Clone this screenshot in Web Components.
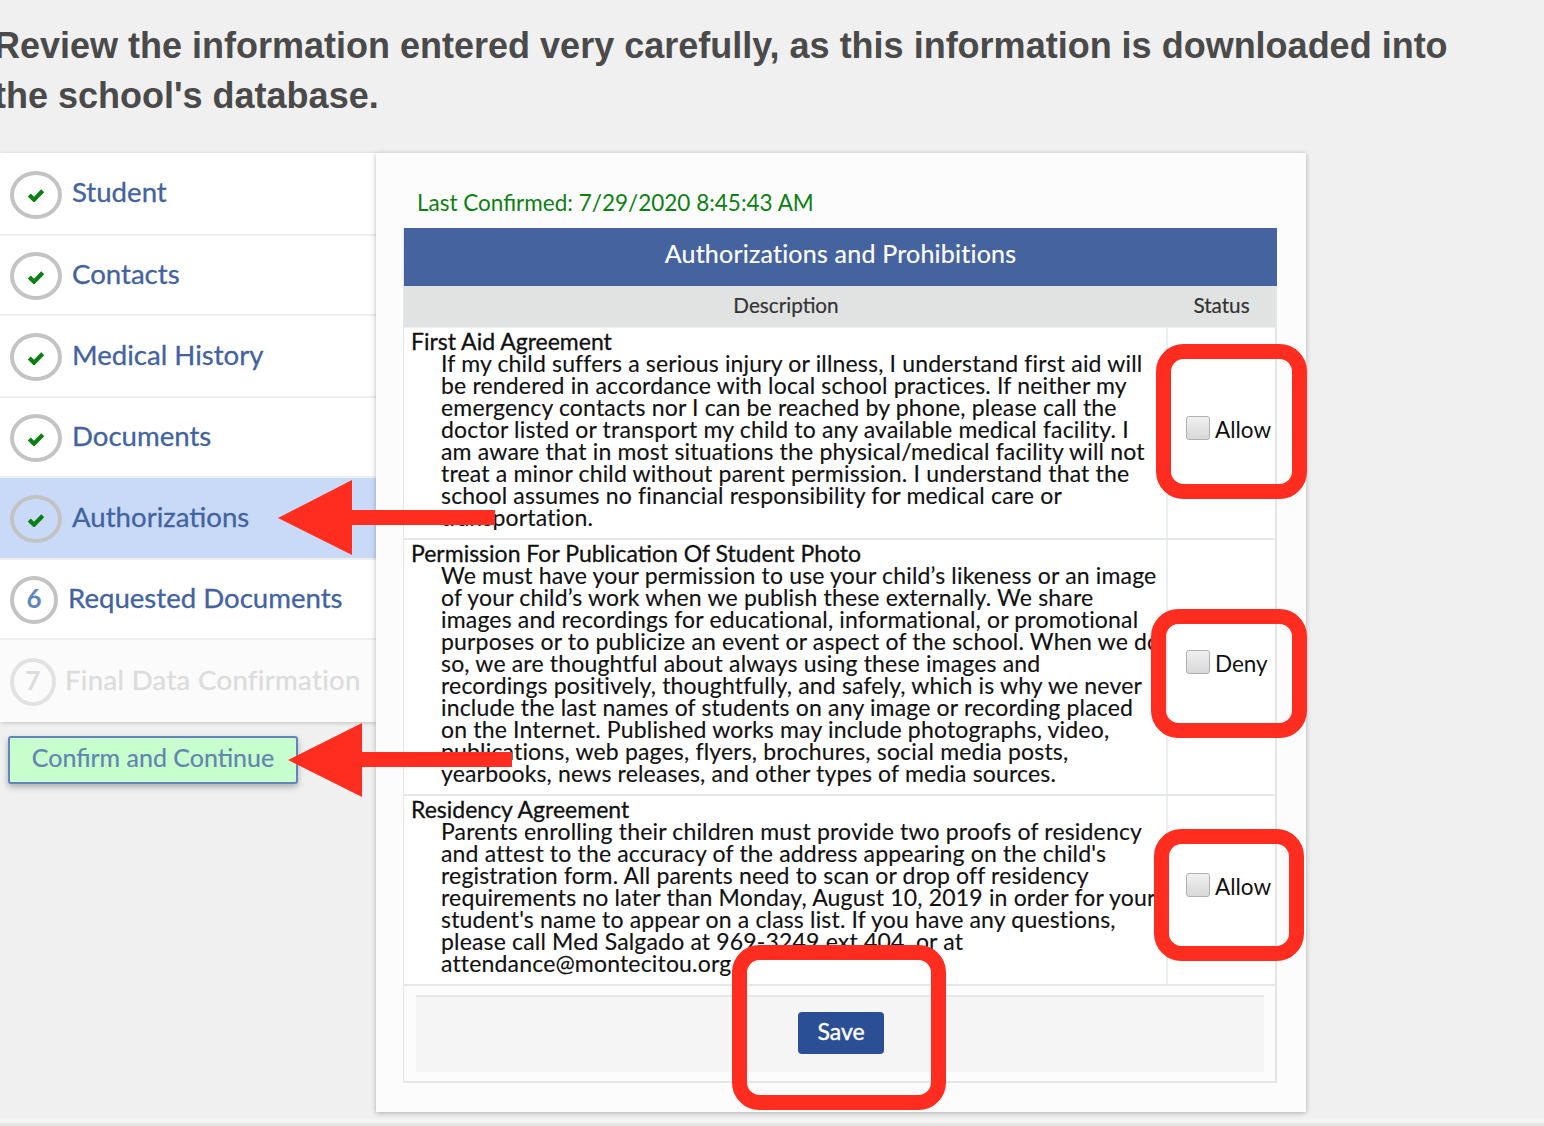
<!DOCTYPE html>
<html lang="en">
<head>
<meta charset="utf-8">
<title>Authorizations</title>
<style>
    html, body { margin: 0; padding: 0; }
    body {
        background: #f0f0f0;
        font-family: Lato, "Open Sans", sans-serif;
        height: 1126px;
        overflow: hidden;
        position: relative;
        width: 1544px;
    }
</style>
</head>
<body>
<page-intro>Review the information entered very carefully, as this information is downloaded into<br>the school's database.</page-intro>

<wizard-layout>
    <step-list slot="side">
        <step-item done height="83">Student</step-item>
        <step-item done height="80">Contacts</step-item>
        <step-item done height="82">Medical History</step-item>
        <step-item done height="80">Documents</step-item>
        <step-item done active height="82">Authorizations</step-item>
        <step-item number="6" height="80">Requested Documents</step-item>
        <step-item number="7" disabled height="82">Final Data Confirmation</step-item>
    </step-list>
    <confirm-button slot="side">Confirm and Continue</confirm-button>

    <auth-panel confirmed="Last Confirmed: 7/29/2020 8:45:43 AM" heading="Authorizations and Prohibitions">
        <auth-row name="First Aid Agreement" status="Allow">If my child suffers a serious injury or illness, I understand first aid will<br>be rendered in accordance with local school practices. If neither my<br>emergency contacts nor I can be reached by phone, please call the<br>doctor listed or transport my child to any available medical facility. I<br>am aware that in most situations the physical/medical facility will not<br>treat a minor child without parent permission. I understand that the<br>school assumes no financial responsibility for medical care or<br>transportation.</auth-row>
        <auth-row name="Permission For Publication Of Student Photo" status="Deny">We must have your permission to use your child’s likeness or an image<br>of your child’s work when we publish these externally. We share<br>images and recordings for educational, informational, or promotional<br>purposes or to publicize an event or aspect of the school. When we do<br>so, we are thoughtful about always using these images and<br>recordings positively, thoughtfully, and safely, which is why we never<br>include the last names of students on any image or recording placed<br>on the Internet. Published works may include photographs, video,<br>publications, web pages, flyers, brochures, social media posts,<br>yearbooks, news releases, and other types of media sources.</auth-row>
        <auth-row name="Residency Agreement" status="Allow">Parents enrolling their children must provide two proofs of residency<br>and attest to the accuracy of the address appearing on the child's<br>registration form. All parents need to scan or drop off residency<br>requirements no later than Monday, August 10, 2019 in order for your<br>student's name to appear on a class list. If you have any questions,<br>please call Med Salgado at 969-3249 ext 404, or at<br>attendance@montecitou.org.</auth-row>
    </auth-panel>
</wizard-layout>

<page-foot></page-foot>

<markup-layer></markup-layer>

<script>
const check = `<svg width="16" height="14" viewBox="0 0 16 14"><path d="M1.3 7 L6 11.7 L14.7 2.8" fill="none" stroke="#0b8012" stroke-width="4.2"/></svg>`;

class PageIntro extends HTMLElement {
    constructor() {
        super();
        this.attachShadow({ mode: 'open' }).innerHTML = `
            <style>
                :host {
                    box-sizing: border-box;
                    color: #4a4a4a;
                    display: block;
                    font: bold 36px/50px "Liberation Sans", Arial, sans-serif;
                    height: 153px;
                    margin-left: -6px;
                    padding-top: 21px;
                    white-space: nowrap;
                }
            </style>
            <slot></slot>`;
    }
}

class WizardLayout extends HTMLElement {
    constructor() {
        super();
        this.attachShadow({ mode: 'open' }).innerHTML = `
            <style>
                :host { display: flex; align-items: flex-start; }
                .side { display: flex; flex-direction: column; width: 376px; flex: none; }
            </style>
            <div class="side"><slot name="side"></slot></div>
            <slot></slot>`;
    }
}

class StepList extends HTMLElement {
    constructor() {
        super();
        this.attachShadow({ mode: 'open' }).innerHTML = `
            <style>
                :host { display: block; box-shadow: 1px 1px 4px rgba(0,0,0,.2); }
            </style>
            <slot></slot>`;
    }
}

class StepItem extends HTMLElement {
    constructor() {
        super();
        const number = this.getAttribute('number');
        const wide = number === '6' ? 48 : number === '7' ? 46 : 52;
        this.attachShadow({ mode: 'open' }).innerHTML = `
            <style>
                :host {
                    align-items: center;
                    background: #fff;
                    border-bottom: 2px solid #efefef;
                    box-sizing: border-box;
                    color: #42639f;
                    display: flex;
                    font-size: 27.6px;
                    gap: 10px;
                    height: ${this.getAttribute('height')}px;
                    padding: 0 0 0 10px;
                    white-space: nowrap;
                    -webkit-text-stroke: .3px;
                }
                :host([active]) { background: #c9daf9; }
                :host([disabled]) { background: #fbfbfb; border-bottom: 0; color: #dcdcdc; letter-spacing: .3px; }
                .mark {
                    align-items: center;
                    border: 4px solid #c3c3c3;
                    border-radius: 50%;
                    box-sizing: border-box;
                    color: #5f86b8;
                    display: flex;
                    flex: none;
                    font-size: 26px;
                    font-weight: bold;
                    height: 48px;
                    justify-content: center;
                    line-height: 36px;
                    margin-top: 2px;
                    padding-bottom: ${number ? 4 : 0}px;
                    padding-top: 0;
                    width: ${wide}px;
                    -webkit-text-stroke: 0;
                }
                :host([disabled]) .mark { border-color: #e2e2e2; color: #dcdcdc; }
                .label { margin-top: -4px; }
                :host([disabled]) .label { margin-left: -1px; }
                svg { margin-top: 1px; }
            </style>
            <span class="mark">${number || check}</span>
            <span class="label"><slot></slot></span>`;
    }
}

class ConfirmButton extends HTMLElement {
    constructor() {
        super();
        this.attachShadow({ mode: 'open' }).innerHTML = `
            <style>
                :host {
                    align-items: center;
                    background: #c8fdcd;
                    border: 2px solid #6484bb;
                    border-radius: 3px;
                    box-shadow: 0 3px 6px rgba(0,0,0,.28);
                    box-sizing: border-box;
                    color: #5f86ae;
                    display: flex;
                    font-size: 25px;
                    height: 48px;
                    justify-content: center;
                    margin: 14px 0 0 8px;
                    padding-bottom: 7px;
                    width: 290px;
                    -webkit-text-stroke: .2px;
                }
            </style>
            <slot></slot>`;
    }
}

class AuthPanel extends HTMLElement {
    constructor() {
        super();
        this.attachShadow({ mode: 'open' }).innerHTML = `
            <style>
                :host {
                    background: #fcfcfc;
                    box-shadow: 0 1px 5px rgba(0,0,0,.28);
                    box-sizing: border-box;
                    display: block;
                    height: 959px;
                    padding: 33px 29px 0 27px;
                    width: 930px;
                }
                .confirmed { color: #0b8012; font-size: 22.5px; height: 42px; line-height: 34px; padding-left: 14px; }
                .table { border: solid #e4e6e6; border-width: 0 2px 2px 1px; }
                .title { align-items: center; background: #44639f; box-sizing: border-box; color: #fff; display: flex; font-size: 25px; height: 58px; justify-content: center; letter-spacing: .22px; margin-right: -2px; padding-bottom: 8px; -webkit-text-stroke: .2px; }
                .columns { background: #e1e3e3; border-bottom: 1px solid #eee; color: #333; display: grid; font-size: 20.7px; grid-template-columns: 764px 1fr; height: 41px; line-height: 38px; text-align: center; -webkit-text-stroke: .2px; }
                .footer { background: #f5f5f5; border-top: 2px solid #e8e8e8; box-sizing: border-box; display: flex; height: 77px; justify-content: center; margin: 9px 11px 9px 12px; padding-top: 15px; }
                .save { align-items: center; background: #2a4f94; border-radius: 4px; box-sizing: border-box; color: #fff; display: flex; font-size: 23px; height: 42px; justify-content: center; margin-left: 2px; padding-bottom: 5px; width: 86px; -webkit-text-stroke: .4px; }
            </style>
            <div class="confirmed">${this.getAttribute('confirmed')}</div>
            <div class="table">
                <div class="title">${this.getAttribute('heading')}</div>
                <div class="columns"><span>Description</span><span>Status</span></div>
                <slot></slot>
                <div class="footer"><span class="save">Save</span></div>
            </div>`;
    }
}

class AuthRow extends HTMLElement {
    constructor() {
        super();
        this.attachShadow({ mode: 'open' }).innerHTML = `
            <style>
                :host {
                    background: #fff;
                    border-bottom: 2px solid #e6e8e8;
                    color: #111;
                    display: grid;
                    font-size: 23px;
                    grid-template-columns: 764px 1fr;
                    line-height: 22px;
                    white-space: nowrap;
                }
                .text { border-right: 2px solid #e9eef3; box-sizing: border-box; padding: 2px 0 10px 7px; }
                .name { -webkit-text-stroke: .3px; }
                .body { letter-spacing: .17px; padding-left: 30px; -webkit-text-stroke: .15px; }
                .status { align-items: center; display: flex; font-size: 22.5px; gap: 5px; padding: 0 0 6px 18px; }
                .box {
                    background: linear-gradient(#f0f0f0, #d8d8d8);
                    border: 1px solid #b0b0b0;
                    border-radius: 3px;
                    box-sizing: border-box;
                    flex: none;
                    height: 24px;
                    margin-top: -4px;
                    width: 24px;
                }
            </style>
            <div class="text">
                <div class="name">${this.getAttribute('name')}</div>
                <div class="body"><slot></slot></div>
            </div>
            <div class="status"><span class="box"></span><span>${this.getAttribute('status')}</span></div>`;
    }
}

class PageFoot extends HTMLElement {
    constructor() {
        super();
        this.attachShadow({ mode: 'open' }).innerHTML = `
            <style>
                :host { background: #f3f3f3; border-bottom: 3px solid #e7e7e7; display: block; height: 5px; margin-top: 6px; }
            </style>`;
    }
}

// the red boxes and arrows somebody drew over the screenshot
class MarkupLayer extends HTMLElement {
    constructor() {
        super();
        const boxes = [[1156, 344, 151, 155], [1151, 609, 156, 129], [1154, 829, 150, 132], [732, 945, 214, 165]];
        const rects = boxes.map(([x, y, w, h]) =>
            `<rect x="${x + 7.5}" y="${y + 7.5}" width="${w - 15}" height="${h - 15}" rx="20" fill="none" stroke="#ff2d1f" stroke-width="15"/>`).join('');
        this.attachShadow({ mode: 'open' }).innerHTML = `
            <style>
                :host { display: block; position: absolute; left: 0; top: 0; pointer-events: none; }
                svg { display: block; }
            </style>
            <svg width="1544" height="1126" viewBox="0 0 1544 1126">
                ${rects}
                <path d="M278 518 L352 480 V510 H495 V525 H352 V555 Z" fill="#ff2d1f"/>
                <path d="M288 760 L362 723 V752 H512 V767 H362 V797 Z" fill="#ff2d1f"/>
            </svg>`;
    }
}

customElements.define('page-intro', PageIntro);
customElements.define('wizard-layout', WizardLayout);
customElements.define('step-list', StepList);
customElements.define('step-item', StepItem);
customElements.define('confirm-button', ConfirmButton);
customElements.define('auth-panel', AuthPanel);
customElements.define('auth-row', AuthRow);
customElements.define('page-foot', PageFoot);
customElements.define('markup-layer', MarkupLayer);
</script>
</body>
</html>
